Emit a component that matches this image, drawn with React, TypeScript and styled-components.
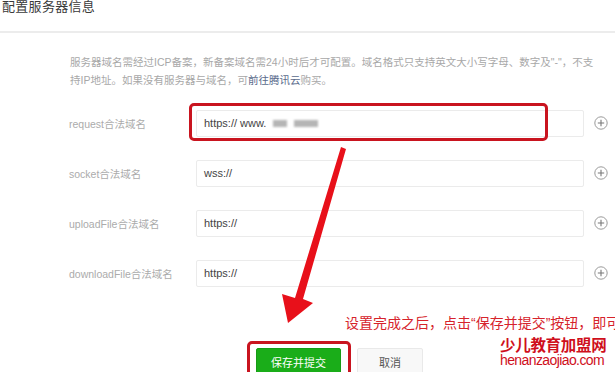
import React from "react";
import styled, { createGlobalStyle } from "styled-components";

const Global = createGlobalStyle`
  html, body { margin: 0; padding: 0; background: #fff; }
  body { font-family: "Liberation Sans", "Noto Sans CJK SC", sans-serif; }
`;

const Page = styled.div`
  position: relative;
  width: 615px;
  height: 372px;
  overflow: hidden;
  background: #fff;
`;

const Title = styled.div`
  height: 31px;
  padding-left: 2px;
  font-size: 13px;
  line-height: 14px;
  color: #3a3a3a;
  border-bottom: 2px solid #ececec;
  letter-spacing: 0.3px;
`;

const Desc = styled.div`
  margin: 20px 0 0 70px;
  font-size: 10.5px;
  line-height: 18px;
  color: #a8a8a8;
  white-space: nowrap;
`;

const Link = styled.span`
  color: #5a6b8c;
`;

const Rows = styled.div`
  margin-top: 9px;
  display: flex;
  flex-direction: column;
`;

const Row = styled.div`
  height: 50px;
  display: flex;
  align-items: center;
`;

const Label = styled.div`
  width: 127px;
  padding-left: 69px;
  font-size: 10.5px;
  color: #ababab;
`;

const Input = styled.div`
  width: 388px;
  height: 27px;
  box-sizing: border-box;
  border: 1px solid #ebebeb;
  border-radius: 2px;
  padding-left: 7px;
  display: flex;
  align-items: center;
  gap: 4px;
  font-size: 11px;
  color: #444;
`;

const Blur = styled.span<{ $w: number }>`
  display: inline-block;
  width: ${(p) => p.$w}px;
  height: 7px;
  background: #b5b5b5;
  filter: blur(1px);
  margin-left: 3px;
`;

const Plus = styled.div`
  margin-left: 10px;
  width: 14px;
  height: 14px;
  display: flex;
`;

const Buttons = styled.div`
  margin: 50px 0 0 256px;
  display: flex;
  gap: 16px;
`;

const Btn = styled.div<{ $primary?: boolean }>`
  width: ${(p) => (p.$primary ? 85 : 66)}px;
  height: 28px;
  box-sizing: border-box;
  display: flex;
  align-items: center;
  justify-content: center;
  font-size: 11px;
  border-radius: 2px;
  background: ${(p) => (p.$primary ? "#1aad19" : "#f8f8f8")};
  color: ${(p) => (p.$primary ? "#fff" : "#555")};
  border: 1px solid ${(p) => (p.$primary ? "#179b16" : "#e9e9e9")};
`;

const Highlight = styled.div<{ $x: number; $y: number; $w: number; $h: number }>`
  position: absolute;
  left: ${(p) => p.$x}px;
  top: ${(p) => p.$y}px;
  width: ${(p) => p.$w}px;
  height: ${(p) => p.$h}px;
  box-sizing: border-box;
  border: 3px solid #c9141f;
  border-radius: 5px;
`;

const Overlay = styled.svg`
  position: absolute;
  left: 0;
  top: 0;
`;

const Note = styled.div`
  position: absolute;
  left: 345px;
  top: 314px;
  font-size: 14px;
  line-height: 18px;
  color: #d6232b;
  white-space: nowrap;
`;

const Mark = styled.div`
  position: absolute;
  left: 500px;
  top: 336px;
  color: #cf0f1c;
  display: flex;
  flex-direction: column;
  align-items: flex-start;
`;

const MarkCn = styled.div`
  font-size: 15.5px;
  line-height: 17px;
  font-weight: bold;
  letter-spacing: -0.3px;
  font-family: "Noto Sans CJK SC", sans-serif;
`;

const MarkEn = styled.div`
  font-size: 14px;
  line-height: 15px;
  letter-spacing: -0.6px;
  font-family: "Liberation Sans", sans-serif;
`;

const PlusIcon = () => (
  <svg width="14" height="14" viewBox="0 0 14 14">
    <circle cx="7" cy="7" r="6.2" fill="none" stroke="#9a9a9a" strokeWidth="1" />
    <path d="M7 3.8v6.4M3.8 7h6.4" stroke="#777" strokeWidth="1.1" />
  </svg>
);

const rows = [
  { label: "request合法域名", value: "https:// www.", blur: true },
  { label: "socket合法域名", value: "wss://" },
  { label: "uploadFile合法域名", value: "https://" },
  { label: "downloadFile合法域名", value: "https://" },
];

export default function App() {
  return (
    <Page>
      <Global />
      <Title>配置服务器信息</Title>
      <Desc>
        服务器域名需经过ICP备案，新备案域名需24小时后才可配置。域名格式只支持英文大小写字母、数字及"-"，不支
        <br />
        持IP地址。如果没有服务器与域名，可<Link>前往腾讯云</Link>购买。
      </Desc>
      <Rows>
        {rows.map((r) => (
          <Row key={r.label}>
            <Label>{r.label}</Label>
            <Input>
              {r.value}
              {r.blur && (
                <>
                  <Blur $w={14} />
                  <Blur $w={24} />
                </>
              )}
            </Input>
            <Plus>
              <PlusIcon />
            </Plus>
          </Row>
        ))}
      </Rows>
      <Buttons>
        <Btn $primary>保存并提交</Btn>
        <Btn>取消</Btn>
      </Buttons>

      <Highlight $x={189} $y={103} $w={359} $h={38} />
      <Highlight $x={247} $y={341} $w={104} $h={40} />
      <Overlay width="615" height="372" viewBox="0 0 615 372">
        <polygon
          points="341,147 346,149 303,299 313,303 288,323 282,294 295,298"
          fill="#e8101a"
        />
      </Overlay>
      <Note>设置完成之后，点击“保存并提交”按钮，即可</Note>
      <Mark>
        <MarkCn>少儿教育加盟网</MarkCn>
        <MarkEn>henanzaojiao.com</MarkEn>
      </Mark>
    </Page>
  );
}
